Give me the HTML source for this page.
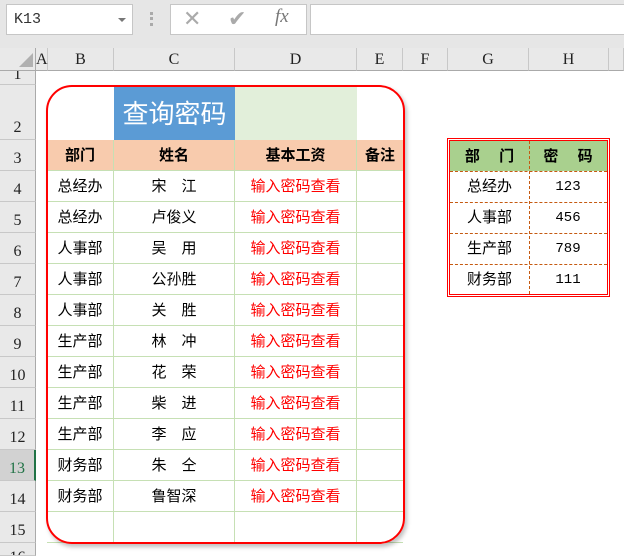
<!DOCTYPE html><html><head><meta charset="utf-8"><style>
*{margin:0;padding:0;box-sizing:border-box}
body{width:624px;height:556px;overflow:hidden;background:#fff;position:relative;font-family:"Liberation Sans","Noto Sans CJK SC",sans-serif;font-size:15px}
.a{position:absolute}
.rh{position:absolute;left:0;width:36px;background:#e9e9e9;border-bottom:1px solid #c8c8c8;border-right:1px solid #aaa;font-family:"Liberation Serif",serif;font-size:16px;text-align:center;color:#222;overflow:hidden}
.ch{position:absolute;top:48px;height:23px;background:#e9e9e9;border-right:1px solid #c8c8c8;border-bottom:1px solid #aaa;font-family:"Liberation Serif",serif;font-size:16px;text-align:center;line-height:24px;color:#222}
.c{position:absolute;text-align:center;border-right:1px solid #c6e0b4;border-bottom:1px solid #c6e0b4;white-space:pre;font-family:"Liberation Sans","Noto Sans CJK SC",sans-serif}
.red{color:#f00}
</style></head><body>
<div class="a" style="left:0;top:0;width:624px;height:48px;background:#e6e6e6"></div>
<div class="a" style="left:6px;top:4px;width:127px;height:31px;background:#fff;border:1px solid #c6c6c6;font-size:15px;line-height:30px;padding-left:7px;color:#333;font-family:'Liberation Mono',monospace">K13</div>
<div class="a" style="left:118px;top:18px;border-left:4px solid transparent;border-right:4px solid transparent;border-top:4px solid #777"></div>
<div class="a" style="left:150px;top:12px;width:3px;height:14px;border-left:3px dotted #aaa"></div>
<div class="a" style="left:170px;top:4px;width:137px;height:31px;background:#fff;border:1px solid #c6c6c6"></div>
<div class="a" style="left:183px;top:6px;font-size:22px;color:#aaa">✕</div>
<div class="a" style="left:228px;top:6px;font-size:22px;color:#aaa">✔</div>
<div class="a" style="left:275px;top:6px;font-size:19px;color:#777;font-family:'Liberation Serif',serif;font-style:italic">fx</div>
<div class="a" style="left:310px;top:4px;width:320px;height:31px;background:#fff;border:1px solid #c6c6c6"></div>
<div class="a" style="left:0;top:48px;width:36px;height:23px;background:#e9e9e9;border-right:1px solid #aaa;border-bottom:1px solid #aaa"></div>
<div class="a" style="left:19px;top:53px;width:0;height:0;border-left:14px solid transparent;border-bottom:14px solid #b0b0b0"></div>
<div class="ch" style="left:36px;width:12px">A</div>
<div class="ch" style="left:48px;width:66px">B</div>
<div class="ch" style="left:114px;width:121px">C</div>
<div class="ch" style="left:235px;width:122px">D</div>
<div class="ch" style="left:357px;width:46px">E</div>
<div class="ch" style="left:403px;width:45px">F</div>
<div class="ch" style="left:448px;width:81px">G</div>
<div class="ch" style="left:529px;width:80px">H</div>
<div class="ch" style="left:609px;width:15px"></div>
<div class="rh" style="top:71px;height:14px;line-height:8px">1</div>
<div class="rh" style="top:85px;height:55px;line-height:86px">2</div>
<div class="rh" style="top:140px;height:31px;line-height:38px">3</div>
<div class="rh" style="top:171px;height:31px;line-height:38px">4</div>
<div class="rh" style="top:202px;height:31px;line-height:38px">5</div>
<div class="rh" style="top:233px;height:31px;line-height:38px">6</div>
<div class="rh" style="top:264px;height:31px;line-height:38px">7</div>
<div class="rh" style="top:295px;height:31px;line-height:38px">8</div>
<div class="rh" style="top:326px;height:31px;line-height:38px">9</div>
<div class="rh" style="top:357px;height:31px;line-height:38px">10</div>
<div class="rh" style="top:388px;height:31px;line-height:38px">11</div>
<div class="rh" style="top:419px;height:31px;line-height:38px">12</div>
<div class="rh" style="top:450px;height:31px;line-height:38px;background:#d2d2d2;border-right:2px solid #217346;color:#217346">13</div>
<div class="rh" style="top:481px;height:31px;line-height:38px">14</div>
<div class="rh" style="top:512px;height:31px;line-height:38px">15</div>
<div class="rh" style="top:543px;height:13px;line-height:30px">16</div>

<div class="a" style="left:114px;top:85px;width:121px;height:55px;background:#5b9bd5;color:#fff;font-size:26px;line-height:58px;text-align:center">查询密码</div>
<div class="a" style="left:235px;top:85px;width:122px;height:55px;background:#e2efda"></div>
<div class="a" style="left:47px;top:140px;width:356px;height:31px;background:#f8cbad"></div>
<div class="c" style="left:47px;top:140px;width:67px;height:31px;line-height:31px;font-weight:bold">部门</div>
<div class="c" style="left:114px;top:140px;width:121px;height:31px;line-height:31px;font-weight:bold">姓名</div>
<div class="c" style="left:235px;top:140px;width:122px;height:31px;line-height:31px;font-weight:bold">基本工资</div>
<div class="c" style="left:357px;top:140px;width:46px;height:31px;line-height:31px;font-weight:bold;border-right:none">备注</div>
<div id="rows"></div>
<script>
var d=["总经办","总经办","人事部","人事部","人事部","生产部","生产部","生产部","生产部","财务部","财务部",""];
var n=["宋　江","卢俊义","吴　用","公孙胜","关　胜","林　冲","花　荣","柴　进","李　应","朱　仝","鲁智深",""];
var h="";for(var i=0;i<12;i++){var t=171+31*i;var p=i<11?"输入密码查看":"";
h+='<div class="c" style="left:47px;top:'+t+'px;width:67px;height:31px;line-height:31px">'+d[i]+'</div>';
h+='<div class="c" style="left:114px;top:'+t+'px;width:121px;height:31px;line-height:31px">'+n[i]+'</div>';
h+='<div class="c red" style="left:235px;top:'+t+'px;width:122px;height:31px;line-height:31px">'+p+'</div>';
h+='<div class="c" style="left:357px;top:'+t+'px;width:46px;height:31px;border-right:none"></div>';}
document.getElementById("rows").innerHTML=h;
</script>
<div class="a" style="left:46px;top:85px;width:359px;height:459px;border:2px solid #f00;border-radius:26px;box-shadow:2px 3px 4px rgba(0,0,0,.25);background:transparent"></div>

<div class="a" style="left:447px;top:138px;width:163px;height:159px;border:1px solid #f00"></div>
<div class="a" style="left:449px;top:140px;width:159px;height:155px;border:1px solid #f00"></div>
<div class="a" style="left:450px;top:141px;width:157px;height:30px;background:#a9d08e"></div>
<div class="a" style="left:529px;top:141px;height:153px;border-left:1px dashed #c55a11"></div>
<div class="a" style="left:450px;top:171px;width:157px;border-top:1px dashed #c55a11"></div>
<div class="a" style="left:450px;top:202px;width:157px;border-top:1px dashed #c55a11"></div>
<div class="a" style="left:450px;top:233px;width:157px;border-top:1px dashed #c55a11"></div>
<div class="a" style="left:450px;top:264px;width:157px;border-top:1px dashed #c55a11"></div>
<div class="a" style="left:450px;top:141px;width:79px;height:30px;line-height:31px;text-align:center;font-weight:bold;white-space:pre">部　 门</div>
<div class="a" style="left:529px;top:141px;width:78px;height:30px;line-height:31px;text-align:center;font-weight:bold;white-space:pre">密　 码</div>
<div class="a" style="left:450px;top:171px;width:79px;line-height:31px;text-align:center">总经办<br>人事部<br>生产部<br>财务部</div>
<div class="a" style="left:529px;top:172px;width:78px;line-height:31px;text-align:center;font-family:'Liberation Mono',monospace;font-size:14px">123<br>456<br>789<br>111</div>
</body></html>
